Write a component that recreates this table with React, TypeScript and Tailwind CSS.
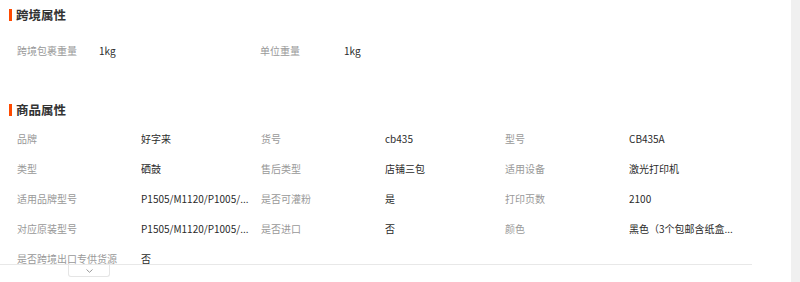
import React from 'react';

type Attr = { label: string; value: string };

const crossBorder: Attr[] = [
  { label: '跨境包裹重量', value: '1kg' },
  { label: '单位重量', value: '1kg' },
];

const goods: Attr[] = [
  { label: '品牌', value: '好字来' },
  { label: '货号', value: 'cb435' },
  { label: '型号', value: 'CB435A' },
  { label: '类型', value: '硒鼓' },
  { label: '售后类型', value: '店铺三包' },
  { label: '适用设备', value: '激光打印机' },
  { label: '适用品牌型号', value: 'P1505/M1120/P1005/...' },
  { label: '是否可灌粉', value: '是' },
  { label: '打印页数', value: '2100' },
  { label: '对应原装型号', value: 'P1505/M1120/P1005/...' },
  { label: '是否进口', value: '否' },
  { label: '颜色', value: '黑色（3个包邮含纸盒...' },
  { label: '是否跨境出口专供货源', value: '否' },
];

const SectionTitle: React.FC<{ title: string; className?: string }> = ({ title, className }) => (
  <div className={`flex items-center h-[28px] ${className ?? ''}`}>
    <span className="ml-[9px] w-[3px] h-[12px] bg-[#ff4a00]" />
    <span className="ml-[4px] text-[12.5px] font-bold text-[#333]">{title}</span>
  </div>
);

const App: React.FC = () => {
  return (
    <div
      className="flex w-[800px] h-[282px] bg-white overflow-hidden"
      style={{ fontFamily: '"Noto Sans CJK SC", "Noto Sans", sans-serif' }}
    >
      <div className="w-[791px]">
        <div className="w-[752px] h-[264px] overflow-hidden border-b border-[#e8e8e8] box-content">
          <SectionTitle title="跨境属性" className="mt-[1px]" />
          <div className="mt-[6px] flex h-[30px] items-center pl-[17px] text-[10px]">
            {crossBorder.map((a, i) => (
              <div key={a.label} className="flex items-center">
                <span className={`text-[#999] ${i === 0 ? 'w-[82px]' : 'w-[84px]'}`}>{a.label}</span>
                <span className={`text-[#2b2b2b] ${i === 0 ? 'w-[161px]' : 'w-[120px]'}`}>{a.value}</span>
              </div>
            ))}
          </div>

          <SectionTitle title="商品属性" className="mt-[31px]" />
          <div className="-mt-[1px] grid grid-cols-[244px_244px_244px] pl-[17px] text-[10px]">
            {goods.map((a) => (
              <div key={a.label} className="flex h-[30px] items-center">
                <span className="w-[124px] shrink-0 text-[#999] whitespace-nowrap">{a.label}</span>
                <span className="w-[110px] truncate text-[#2b2b2b]">{a.value}</span>
              </div>
            ))}
          </div>
        </div>
        <div className="ml-[68px] flex h-[12px] w-[42px] items-center justify-center rounded-b-[3px] border border-t-0 border-[#e5e5e5]">
          <svg width="7" height="4" viewBox="0 0 7 4" fill="none">
            <path d="M0.5 0.5 L3.5 3.3 L6.5 0.5" stroke="#999" strokeWidth="1" />
          </svg>
        </div>
      </div>
      <div className="w-[9px] h-[282px] bg-[#f0f0f0]" />
    </div>
  );
};

export default App;
